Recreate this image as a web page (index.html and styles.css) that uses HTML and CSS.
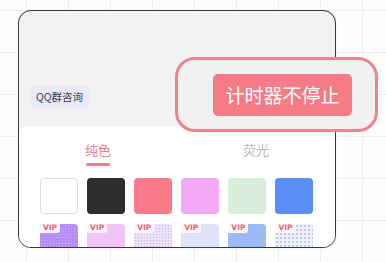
FILE: index.html
```html
<!DOCTYPE html>
<html>
<head>
<meta charset="utf-8">
<link rel="stylesheet" href="styles.css">
</head>
<body>
<div class="stage">
  <div class="card">
    <div class="top">
      <span class="qq">QQ群咨询</span>
    </div>
    <div class="panel">
      <div class="tabs">
        <div class="tab active"><span>纯色</span><i class="bar"></i></div>
        <div class="tab"><span>荧光</span></div>
      </div>
      <div class="swatches">
        <div class="sw white"></div>
        <div class="sw black"></div>
        <div class="sw red"></div>
        <div class="sw pink"></div>
        <div class="sw green"></div>
        <div class="sw blue"></div>
        <div class="sw v1"><b class="vip">VIP</b></div>
        <div class="sw v2"><b class="vip">VIP</b></div>
        <div class="sw v3"><b class="vip">VIP</b></div>
        <div class="sw v4"><b class="vip">VIP</b></div>
        <div class="sw v5"><b class="vip">VIP</b></div>
        <div class="sw v6"><b class="vip">VIP</b></div>
      </div>
    </div>
  </div>
  <div class="highlight">
    <div class="btn">计时器不停止</div>
  </div>
</div>
</body>
</html>
```

FILE: styles.css
```css
html, body {
  margin: 0;
  padding: 0;
}
body {
  width: 386px;
  height: 262px;
  overflow: hidden;
  background-color: #fdfdfd;
  background-image:
    linear-gradient(to right, #eeeeee 1px, transparent 1px),
    linear-gradient(to bottom, #eeeeee 1px, transparent 1px);
  background-size: 42px 42px;
  background-position: 26px 10px;
  font-family: "Noto Sans CJK SC", "Noto Sans", sans-serif;
}
.stage {
  position: relative;
  width: 386px;
  height: 262px;
  padding: 10px 0 0 18px;
  box-sizing: border-box;
}
.card {
  width: 318px;
  height: 238px;
  box-sizing: border-box;
  border: 1.5px solid #3a3a3a;
  border-radius: 13px;
  overflow: hidden;
  background: #f2f2f2;
  display: flex;
  flex-direction: column;
  box-shadow: 0 0 1px rgba(0,0,0,0.3);
}
.top {
  height: 115px;
  flex: none;
  display: flex;
  align-items: flex-end;
  padding: 0 0 18px 12px;
  box-sizing: border-box;
}
.qq {
  display: inline-block;
  background: #e9e9f8;
  color: #3c3c44;
  font-size: 10.5px;
  line-height: 23px;
  height: 23px;
  padding: 0 6px 0 5px;
  border-radius: 3px;
}
.panel {
  flex: 1;
  background: #ffffff;
  border-radius: 8px 8px 0 0;
  display: flex;
  flex-direction: column;
}
.tabs {
  display: flex;
  padding-top: 15px;
}
.tab {
  flex: 1;
  display: flex;
  flex-direction: column;
  align-items: center;
  font-size: 13px;
  line-height: 18px;
  color: #b4b4b4;
}
.tab.active {
  color: #e8808b;
}
.bar {
  display: block;
  width: 24px;
  height: 3px;
  border-radius: 2px;
  background: #e8808b;
  margin-top: 4px;
}
.swatches {
  display: grid;
  grid-template-columns: repeat(6, 1fr);
  column-gap: 9.5px;
  row-gap: 10px;
  padding: 12px 22px 0 21px;
}
.sw {
  height: 36px;
  border-radius: 4px;
  box-sizing: border-box;
  position: relative;
  overflow: hidden;
}
.white { background: #ffffff; border: 1px solid #dcdcdc; }
.black { background: #2d2d30; }
.red { background: #f97b89; }
.pink { background: #f4a9f8; }
.green { background: #d8eedb; }
.blue { background: #5b8ff6; }
.v1 {
  background-color: #b68cf9;
  background-image: radial-gradient(rgba(255,255,255,0.25) 0.6px, transparent 0.8px);
  background-size: 3px 3px;
}
.v2 { background: #f1c3f7; }
.v3 {
  background-color: #ece2f7;
  background-image: radial-gradient(#c9b6ec 0.7px, transparent 0.9px);
  background-size: 3px 3px;
}
.v4 { background: #dfe3f9; }
.v5 { background: #9cbaf6; }
.v6 {
  background-color: #eceef8;
  background-image: radial-gradient(#c3c8ea 0.7px, transparent 0.9px);
  background-size: 4px 4px;
}
.vip {
  position: absolute;
  left: 0;
  top: 0;
  background: #fff6f7;
  color: #e06472;
  font-family: "DejaVu Sans", sans-serif;
  font-weight: bold;
  font-size: 7.5px;
  line-height: 8px;
  padding: 0 3px 1px 3px;
  border-radius: 0 0 3px 0;
}
.highlight {
  position: absolute;
  left: 175px;
  top: 57px;
  width: 203px;
  height: 75px;
  box-sizing: border-box;
  border: 3px solid #ea8590;
  border-radius: 20px;
  background: #f1f1f1;
  display: flex;
  align-items: center;
  padding: 0 0 0 35px;
}
.btn {
  width: 139px;
  height: 42px;
  background: #f57b87;
  border-radius: 5px;
  color: #ffffff;
  font-size: 19px;
  line-height: 42px;
  text-align: center;
  letter-spacing: 0px;
}
```
